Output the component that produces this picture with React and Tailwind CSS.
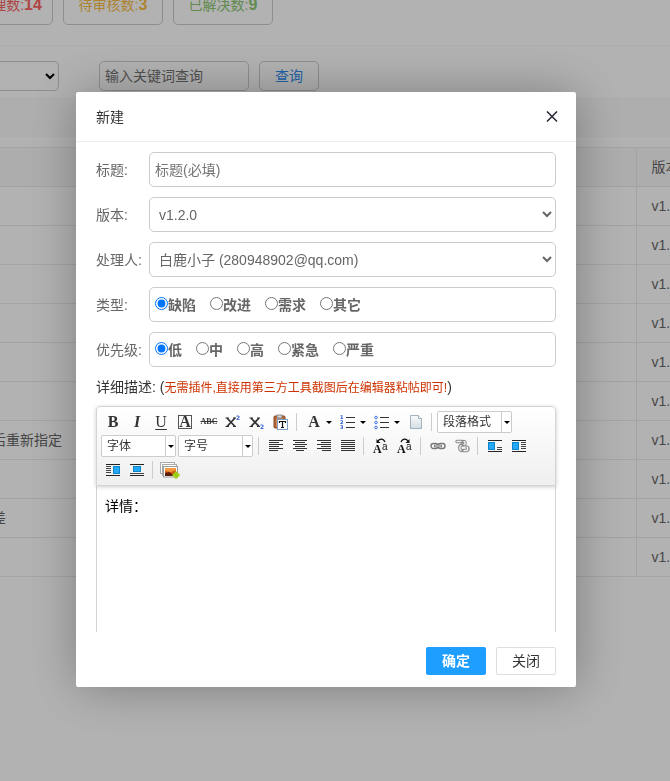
import React from "react";

const stats = [
  { label: "待处理数:", count: 14, color: "text-[#fb6464]" },
  { label: "待审核数:", count: 3, color: "text-[#f7bd48]" },
  { label: "已解决数:", count: 9, color: "text-[#8cc872]" },
];

const bugs = ["", "", "", "", "", "", "后重新指定", "", "差", ""];

const types = ["缺陷", "改进", "需求", "其它"];
const priorities = ["低", "中", "高", "紧急", "严重"];

const Separator = () => (
  <span className="w-[9px] h-[18px] pl-[3px] shrink-0">
    <span className="block w-px h-full bg-[#ccc]" />
  </span>
);

const ToolButton = ({ title, children }) => (
  <button
    type="button"
    title={title}
    className="w-6 h-6 shrink-0 flex items-center justify-center"
  >
    {children}
  </button>
);

const MenuButton = ({ title, children }) => (
  <button
    type="button"
    title={title}
    className="w-[34px] h-6 shrink-0 flex items-center"
  >
    <span className="w-6 flex justify-center">{children}</span>
    <Arrow />
  </button>
);

const Arrow = () => (
  <svg width="6" height="3" viewBox="0 0 6 3" className="shrink-0">
    <path d="M0 0h6L3 3z" fill="#000" />
  </svg>
);

const Combo = ({ label }) => (
  <div className="w-[75px] h-[22px] shrink-0 flex items-center bg-white border border-[#ccc] rounded-xs">
    <select
      aria-label={label}
      className="appearance-none flex-1 min-w-0 h-5 pl-[5px] text-xs text-[#333]"
    >
      <option>{label}</option>
    </select>
    <span className="w-[10px] h-full border-l border-[#ccc] flex items-center justify-center">
      <Arrow />
    </span>
  </div>
);

// horizontal strokes, one [x, width] pair per line
const Lines = ({ rows }) => (
  <svg width="16" height="16" viewBox="0 0 16 16" shapeRendering="crispEdges">
    {rows.map(([x, w], i) => (
      <rect key={i} x={x} y={2 + i * 2} width={w} height="1" fill="#333" />
    ))}
  </svg>
);

const ListIcon = ({ ordered }) => (
  <svg width="16" height="16" viewBox="0 0 16 16">
    {[3, 8, 13].map((y, i) => (
      <g key={y}>
        {ordered ? (
          <text
            x="0"
            y={y + 2}
            fontSize="5"
            fontWeight="bold"
            fontFamily="DejaVu Sans"
            fill="#2a5bd7"
          >
            {i + 1}
          </text>
        ) : (
          <circle cx="2" cy={y + 0.5} r="1.3" fill="none" stroke="#3a6fe8" />
        )}
        <rect x="6" y={y} width="9" height="1" fill="#333" />
      </g>
    ))}
  </svg>
);

const ScriptIcon = ({ sup }) => (
  <svg width="18" height="16" viewBox="0 0 18 16">
    <path
      d="M3 4l8 8.500M11 4l-8 8.500"
      stroke="#333"
      strokeWidth="1.800"
      fill="none"
    />
    <path d="M1.500 4h3.500M9 4h3M1.500 12.500h3.500M9 12.500h3" stroke="#333" />
    <text
      x="12"
      y={sup ? 6 : 15}
      fontSize="6"
      fontWeight="bold"
      fontFamily="DejaVu Sans"
      fill="#2a5bd7"
    >
      2
    </text>
  </svg>
);

const PasteIcon = () => (
  <svg width="16" height="16" viewBox="0 0 16 16">
    <rect x="1" y="2" width="11" height="12" rx="1" fill="#b5643a" stroke="#8a4a22" />
    <rect x="3" y="4" width="7" height="9" fill="#d08a5c" />
    <rect x="4" y="1" width="5" height="3" fill="#d8d8d8" stroke="#777" strokeWidth="0.8" />
    <rect x="4.500" y="5.500" width="10" height="10" fill="#fff" stroke="#7b9cc4" />
    <path d="M6.500 9V7.500h6V9M9.500 7.500V14M8 13.500h3" stroke="#111" strokeWidth="1.200" fill="none" />
  </svg>
);

const PageIcon = () => (
  <svg width="16" height="16" viewBox="0 0 16 16">
    <defs>
      <linearGradient id="page" x1="0" y1="0" x2="0" y2="1">
        <stop offset="0" stopColor="#f8fafb" />
        <stop offset="1" stopColor="#d3dee6" />
      </linearGradient>
    </defs>
    <path d="M2.500 1.500h8l3 3v10h-11z" fill="url(#page)" stroke="#a3b1bb" />
    <path d="M10.500 1.500v3h3" fill="#fff" stroke="#a3b1bb" />
  </svg>
);

const CaseIcon = ({ flip }) => (
  <svg width="18" height="18" viewBox="0 0 18 18">
    <text x="1" y="16" fontSize="12" fontWeight="bold" fontFamily="Liberation Serif" fill="#111">
      A
    </text>
    <text x="10" y="13" fontSize="10" fontFamily="Liberation Sans" fill="#111">
      a
    </text>
    <g transform={flip ? "translate(18 0) scale(-1 1)" : undefined}>
      <path d="M6 4C7.500 1.500 11.500 1 13 5" stroke="#111" strokeWidth="1.200" fill="none" />
      <path d="M4.500 2v4h4z" fill="#111" />
    </g>
  </svg>
);

const LinkIcon = () => (
  <svg width="16" height="16" viewBox="0 0 16 16" fill="none">
    <rect x="1" y="5.500" width="7" height="5" rx="2.500" stroke="#777" strokeWidth="1.400" />
    <rect x="8" y="5.500" width="7" height="5" rx="2.500" stroke="#777" strokeWidth="1.400" />
    <path d="M4 8h8" stroke="#777" strokeWidth="2.500" />
    <path d="M5 8h6" stroke="#fff" strokeWidth="0.800" />
  </svg>
);

const UnlinkIcon = () => (
  <svg width="16" height="16" viewBox="0 0 16 16" fill="none">
    <g stroke="#888" strokeWidth="3.400" strokeLinecap="round">
      <path d="M3 3.500h4.500M9.500 3.500c2 0 2 3 0 3.500M7.500 7c-2.500 1-2 5 0 5.500M9.500 12.500h3.500c1.500-.5 1.500-3 0-3.500" />
    </g>
    <g stroke="#f4f4f4" strokeWidth="1.400" strokeLinecap="round">
      <path d="M3 3.500h4M10 3.500c1.500 0 1.500 3 0 3M7 7.500c-1.500 1-1.500 4 0 5M10 12.500h3c1-.5 1-3 0-3.500" />
    </g>
  </svg>
);

const floatLines = {
  none: "M10 9.500h5M10 11.500h5",
  left: "M10 4.500h5M10 6.500h5M10 8.500h5M10 10.500h5",
  right: "M1 4.500h5M1 6.500h5M1 8.500h5M1 10.500h5",
  center: "M1 11.500h14",
};

const FloatIcon = ({ kind }) => (
  <svg width="16" height="16" viewBox="0 0 16 16" shapeRendering="crispEdges">
    <path d="M1 2.500h14M1 13.500h14" stroke="#222" />
    <path d={floatLines[kind]} stroke="#444" />
    <rect
      x={kind === "right" ? 8 : kind === "center" ? 4 : 1}
      y="4"
      width={kind === "center" ? 8 : 7}
      height={kind === "center" ? 6 : 8}
      fill="#1183c9"
    />
    <rect
      x={kind === "right" ? 9 : kind === "center" ? 5 : 2}
      y="5"
      width={kind === "center" ? 6 : 5}
      height={kind === "center" ? 4 : 6}
      fill="#22a9f5"
    />
  </svg>
);

const ImageIcon = () => (
  <svg width="20" height="18" viewBox="0 0 20 18">
    <rect x="0.500" y="1.500" width="14" height="11" fill="#fff" stroke="#aaa" />
    <rect x="2.500" y="3.500" width="14" height="11" fill="#fff" stroke="#aaa" />
    <rect x="3.500" y="5.500" width="14" height="10.500" fill="#fff" stroke="#999" />
    <rect x="5" y="7" width="11" height="8" fill="#d9541a" />
    <path d="M5 7h11v2l-5 2-6-1z" fill="#f59a3a" />
    <path d="M5 12l4-1 3 2 4-1v3H5z" fill="#5a1d08" />
    <path d="M16 10.500v7M12.500 14h7" stroke="#9bd014" strokeWidth="3" />
  </svg>
);

const Toolbar = () => (
  <div className="relative border border-[#d4d4d4] rounded-t px-1 py-[3px] bg-linear-to-b from-white to-[#efefef] shadow-[0_1px_4px_rgba(0,0,0,0.2)]">
    <div className="flex items-center h-6 font-['Liberation_Serif',serif] text-[#333]">
      <ToolButton title="加粗">
        <span className="text-base font-bold">B</span>
      </ToolButton>
      <ToolButton title="斜体">
        <span className="text-base font-bold italic">I</span>
      </ToolButton>
      <ToolButton title="下划线">
        <span className="text-base underline underline-offset-2">U</span>
      </ToolButton>
      <ToolButton title="字符边框">
        <span className="w-[14px] h-[14px] border border-[#555] text-base font-bold flex items-center justify-center">
          A
        </span>
      </ToolButton>
      <ToolButton title="删除线">
        <span className="text-[8px] font-bold line-through">ABC</span>
      </ToolButton>
      <ToolButton title="上标">
        <ScriptIcon sup />
      </ToolButton>
      <ToolButton title="下标">
        <ScriptIcon />
      </ToolButton>
      <ToolButton title="纯文本粘贴模式">
        <PasteIcon />
      </ToolButton>
      <Separator />
      <MenuButton title="字体颜色">
        <span className="text-base font-bold">A</span>
      </MenuButton>
      <MenuButton title="有序列表">
        <ListIcon ordered />
      </MenuButton>
      <MenuButton title="无序列表">
        <ListIcon />
      </MenuButton>
      <ToolButton title="清空文档">
        <PageIcon />
      </ToolButton>
      <Separator />
      <div className="font-['Liberation_Sans','Noto_Sans_CJK_SC',sans-serif]">
        <Combo label="段落格式" />
      </div>
    </div>
    <div className="flex items-center h-6">
      <div className="flex gap-[2px] mr-[2px]">
        <Combo label="字体" />
        <Combo label="字号" />
      </div>
      <Separator />
      <ToolButton title="居左对齐">
        <Lines rows={[[1, 14], [1, 10], [1, 14], [1, 10], [1, 14], [1, 9]]} />
      </ToolButton>
      <ToolButton title="居中对齐">
        <Lines rows={[[1, 14], [3, 10], [1, 14], [3, 10], [1, 14], [4, 8]]} />
      </ToolButton>
      <ToolButton title="居右对齐">
        <Lines rows={[[1, 14], [5, 10], [1, 14], [5, 10], [1, 14], [6, 9]]} />
      </ToolButton>
      <ToolButton title="两端对齐">
        <Lines rows={[[1, 14], [1, 14], [1, 14], [1, 14], [1, 14], [1, 14]]} />
      </ToolButton>
      <Separator />
      <ToolButton title="字母大写">
        <CaseIcon />
      </ToolButton>
      <ToolButton title="字母小写">
        <CaseIcon flip />
      </ToolButton>
      <Separator />
      <ToolButton title="超链接">
        <LinkIcon />
      </ToolButton>
      <ToolButton title="取消链接">
        <UnlinkIcon />
      </ToolButton>
      <Separator />
      <ToolButton title="默认">
        <FloatIcon kind="none" />
      </ToolButton>
      <ToolButton title="左浮动">
        <FloatIcon kind="left" />
      </ToolButton>
    </div>
    <div className="flex items-center h-6">
      <ToolButton title="右浮动">
        <FloatIcon kind="right" />
      </ToolButton>
      <ToolButton title="居中">
        <FloatIcon kind="center" />
      </ToolButton>
      <Separator />
      <ToolButton title="多图上传">
        <ImageIcon />
      </ToolButton>
    </div>
  </div>
);

const fieldClass =
  "flex-1 min-w-0 h-[35px] px-[5px] bg-white border border-[#ccc] rounded-[5px] text-sm text-[#666]";

const FormRow = ({ label, id, children }) => (
  <div className="flex items-center">
    <label htmlFor={id} className="w-[53px] shrink-0 text-[#666] whitespace-nowrap">
      {label}
    </label>
    {children}
  </div>
);

const RadioRow = ({ label, name, options }) => (
  <div className="flex items-center" role="radiogroup" aria-label={label}>
    <span className="w-[53px] shrink-0 text-[#666] whitespace-nowrap">{label}</span>
    <div className="flex-1 h-[35px] px-[5px] border border-[#ccc] rounded-[5px] flex items-center gap-[14px] font-bold text-[#666]">
      {options.map((option, i) => (
        <label key={option} className="flex items-center">
          <input
            type="radio"
            name={name}
            defaultChecked={i === 0}
            className="w-[13px] h-[13px] mb-[3px]"
          />
          {option}
        </label>
      ))}
    </div>
  </div>
);

const BugPage = () => (
  <main className="min-h-screen text-sm text-[#666]">
    <div className="flex gap-[10px] -mt-4 -ml-[47px] pb-5 border-b border-[#f6f6f6]">
      {stats.map((s) => (
        <div
          key={s.label}
          className={`w-[100px] h-[41px] border border-[#ccc] rounded-[5px] flex items-center justify-center whitespace-nowrap ${s.color}`}
        >
          {s.label}
          <b className="text-base">{s.count}</b>
        </div>
      ))}
    </div>
    <div className="flex pt-[15px] pb-[5px] -ml-[41px]">
      <select
        aria-label="状态"
        className="w-[100px] h-[30px] mr-10 border border-[#ccc] rounded-[5px] text-black"
      >
        <option></option>
      </select>
      <input
        aria-label="关键词"
        placeholder="输入关键词查询"
        className="w-[150px] h-[30px] mr-[10px] px-[5px] border border-[#ccc] rounded-[5px] placeholder:text-[#757575]"
      />
      <button
        type="button"
        className="w-[60px] h-[30px] border border-[#ccc] rounded-[5px] text-[#2d8cf0]"
      >
        查询
      </button>
    </div>
    <div className="h-10 mt-px mb-[10px] bg-[#f9f9f9]" />
    <table className="w-full table-fixed border-collapse text-left">
      <thead>
        <tr className="h-[39px] bg-[#f8f8f8] border-y border-[#eaeaea]">
          <th className="font-normal"></th>
          <th className="w-[34px] pl-[15px] font-normal whitespace-nowrap border-l border-[#eaeaea]">
            版本
          </th>
        </tr>
      </thead>
      <tbody>
        {bugs.map((title, i) => (
          <tr key={i} className="h-[39px] border-b border-[#eaeaea]">
            <td>
              <span className="-ml-2">{title}</span>
            </td>
            <td className="pl-[15px] whitespace-nowrap border-l border-[#eaeaea]">
              v1.2.0
            </td>
          </tr>
        ))}
      </tbody>
    </table>
  </main>
);

const CreateDialog = () => (
  <div className="fixed inset-0 bg-black/30 flex items-center justify-center pr-[18px] pb-[2px]">
    <div
      role="dialog"
      aria-labelledby="dialog-title"
      className="w-full max-w-[500px] bg-white rounded-xs shadow-[1px_1px_50px_rgba(0,0,0,0.3)] text-sm text-[#333]"
    >
      <div className="h-[50px] px-5 flex items-center justify-between border-b border-[#eee]">
        <h2 id="dialog-title">新建</h2>
        <button type="button" aria-label="关闭窗口" className="-mr-[2px]">
          <svg width="12" height="12" viewBox="0 0 12 12">
            <path d="M1 0.500l10 10M11 0.500l-10 10" stroke="#2e2d3c" strokeWidth="1.600" />
          </svg>
        </button>
      </div>
      <div className="px-5 pt-[10px]">
        <div className="flex flex-col gap-[10px]">
          <FormRow label="标题:" id="title">
            <input
              id="title"
              placeholder="标题(必填)"
              className={`${fieldClass} placeholder:text-[#757575]`}
            />
          </FormRow>
          <FormRow label="版本:" id="version">
            <select id="version" className={fieldClass}>
              <option>v1.2.0</option>
            </select>
          </FormRow>
          <FormRow label="处理人:" id="handler">
            <select id="handler" className={fieldClass}>
              <option>白鹿小子 (280948902@qq.com)</option>
            </select>
          </FormRow>
          <RadioRow label="类型:" name="type" options={types} />
          <RadioRow label="优先级:" name="priority" options={priorities} />
        </div>
        <label htmlFor="detail" className="block pt-[10px] pb-[9px] leading-5">
          详细描述: (<span className="text-xs text-[#cc3300]">无需插件,直接用第三方工具截图后在编辑器粘帖即可!</span>)
        </label>
        <Toolbar />
        <textarea
          id="detail"
          defaultValue="详情："
          className="block w-full h-[146px] px-2 py-[10px] border-x border-[#d4d4d4] resize-none leading-5 text-black"
        />
      </div>
      <div className="flex justify-end gap-[10px] px-5 pt-[15px] pb-3">
        <button
          type="button"
          className="w-[60px] h-7 bg-[#1e9fff] text-white font-bold rounded-xs"
        >
          确定
        </button>
        <button
          type="button"
          className="w-[60px] h-7 bg-white border border-[#dedede] rounded-xs"
        >
          关闭
        </button>
      </div>
    </div>
  </div>
);

const App = () => (
  <div className="h-screen overflow-hidden font-['Liberation_Sans','Noto_Sans_CJK_SC',sans-serif]">
    <BugPage />
    <CreateDialog />
  </div>
);

export default App;
